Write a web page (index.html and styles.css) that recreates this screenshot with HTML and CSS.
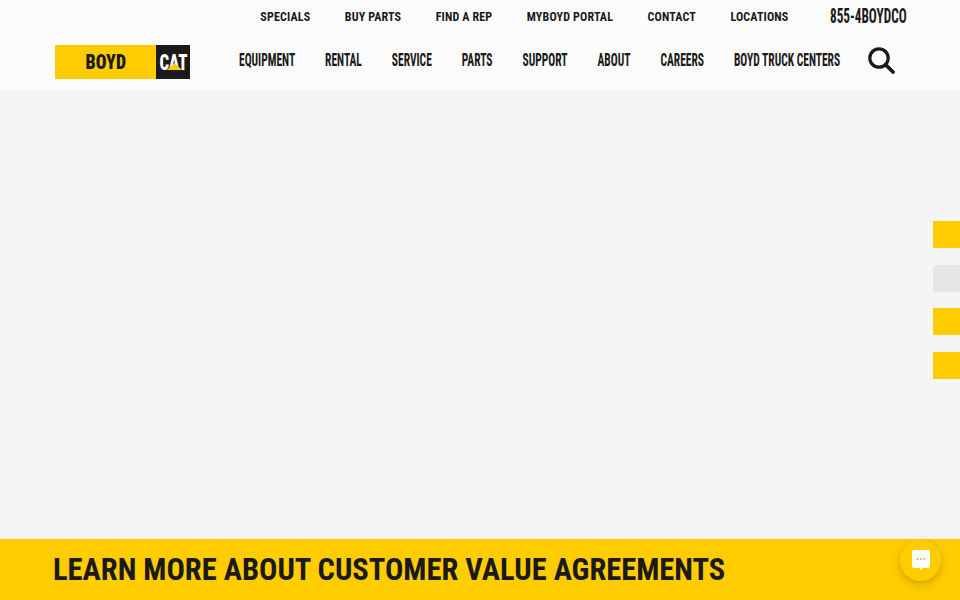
FILE: index.html
```html
<!DOCTYPE html>
<html lang="en">
<head>
  <meta charset="UTF-8">
  <meta name="viewport" content="width=device-width, initial-scale=1.0">
  <title>Boyd CAT</title>
  <link rel="stylesheet" href="styles.css">
</head>
<body>
  <header class="site-header">
    <div class="top-bar">
      <a class="top-link" href="#">SPECIALS</a>
      <a class="top-link" href="#">BUY PARTS</a>
      <a class="top-link" href="#">FIND A REP</a>
      <a class="top-link" href="#">MYBOYD PORTAL</a>
      <a class="top-link" href="#">CONTACT</a>
      <a class="top-link" href="#">LOCATIONS</a>
      <a class="phone" href="#">855-4BOYDCO</a>
    </div>
    <div class="main-bar">
      <a class="logo" href="#">
        <span class="logo-boyd"><span class="logo-boyd-text">BOYD</span></span>
        <span class="logo-cat">
          <span class="logo-cat-text">CAT</span>
          <svg class="logo-cat-mark" width="15" height="7" viewBox="0 0 15 7"><polygon points="7.500,0 15,7 0,7" fill="#ffcc00"/></svg>
        </span>
      </a>
      <nav class="main-nav">
        <a href="#">EQUIPMENT</a>
        <a href="#">RENTAL</a>
        <a href="#">SERVICE</a>
        <a href="#">PARTS</a>
        <a href="#">SUPPORT</a>
        <a href="#">ABOUT</a>
        <a href="#">CAREERS</a>
        <a href="#">BOYD TRUCK CENTERS</a>
      </nav>
      <a class="search" href="#" aria-label="Search">
        <svg width="27" height="27" viewBox="0 0 27 27" fill="none" stroke="#1a1a1a">
          <circle cx="11" cy="11" r="9.200" stroke-width="3.200"/>
          <line x1="18" y1="18" x2="25" y2="25" stroke-width="3.800" stroke-linecap="round"/>
        </svg>
      </a>
    </div>
  </header>

  <main class="hero"></main>

  <section class="banner">
    <h2>LEARN MORE ABOUT CUSTOMER VALUE AGREEMENTS</h2>
  </section>

  <div class="side-tabs">
    <a class="side-tab" href="#"></a>
    <a class="side-tab side-tab-grey" href="#"></a>
    <a class="side-tab" href="#"></a>
    <a class="side-tab" href="#"></a>
  </div>

  <button class="chat-button" aria-label="Chat">
    <svg width="18" height="21" viewBox="0 0 18 21">
      <path d="M2 0h14a2 2 0 0 1 2 2v14a2 2 0 0 1-2 2h-5.500l-1.500 2.500L7.500 18H2a2 2 0 0 1-2-2V2a2 2 0 0 1 2-2z" fill="#fff"/>
      <circle cx="5.500" cy="9" r="1.100" fill="#e0b84a"/>
      <circle cx="9" cy="9" r="1.100" fill="#e0b84a"/>
      <circle cx="12.500" cy="9" r="1.100" fill="#e0b84a"/>
    </svg>
  </button>
</body>
</html>
```

FILE: styles.css
```css
html, body {
  height: 100%;
  overflow: hidden;
}
body {
  margin: 0;
  display: flex;
  flex-direction: column;
  font-family: "Roboto", "Liberation Sans", Arial, sans-serif;
  font-stretch: 75%;
  color: #1a1a1a;
  background-color: #f5f5f5;
}
a {
  color: inherit;
  text-decoration: none;
}
.site-header {
  height: 90px;
  background-color: #fbfbfb;
  flex-shrink: 0;
}
.top-bar {
  height: 32px;
  display: flex;
  justify-content: flex-end;
  align-items: center;
  padding-right: 53px;
}
.top-link {
  margin-top: 1px;
  margin-right: 34.500px;
  font-size: 12px;
  font-weight: 700;
  letter-spacing: 0.15px;
  white-space: nowrap;
}
.phone {
  width: 77px;
  margin-left: 7px;
  font-size: 20px;
  font-weight: 700;
  white-space: nowrap;
  transform: scaleX(0.66);
  transform-origin: left center;
}
.main-bar {
  height: 58px;
  display: flex;
  align-items: center;
  padding-left: 55px;
}
.logo {
  width: 135px;
  height: 34px;
  display: flex;
  margin-top: 2px;
}
.logo-boyd {
  width: 101px;
  background-color: #ffcc00;
  display: flex;
  justify-content: center;
  align-items: center;
}
.logo-boyd-text {
  font-size: 21px;
  font-weight: 900;
  transform: scaleX(0.85);
}
.logo-cat {
  width: 34px;
  background-color: #1a1a1a;
  color: #fff;
  display: flex;
  justify-content: center;
  align-items: center;
  position: relative;
}
.logo-cat-text {
  font-size: 22px;
  font-weight: 900;
  transform: scaleX(0.76);
}
.logo-cat-mark {
  position: absolute;
  left: 11px;
  top: 18px;
}
.main-nav {
  flex: 0 0 602px;
  min-width: 0;
  display: flex;
  gap: 47px;
  margin-left: 49px;
  margin-bottom: 3px;
  font-size: 18px;
  font-weight: 700;
  white-space: nowrap;
  transform: scaleX(0.6375);
  transform-origin: left center;
}
.search {
  display: flex;
  margin-left: 27px;
  margin-bottom: 2px;
}
.hero {
  flex: 1;
}
.banner {
  height: 59px;
  flex-shrink: 0;
  background-color: #ffcc00;
  padding: 0 0 2px 53px;
  display: flex;
  align-items: center;
}
.banner h2 {
  margin: 0;
  font-size: 32px;
  font-weight: 700;
  white-space: nowrap;
  transform: scaleX(0.953);
  transform-origin: left center;
}
.side-tabs {
  position: absolute;
  right: 0;
  top: 221px;
  display: flex;
  flex-direction: column;
  gap: 16.500px;
}
.side-tab {
  display: block;
  width: 27px;
  height: 27px;
  background-color: #ffcc00;
}
.side-tab-grey {
  background-color: #e6e6e6;
}
.chat-button {
  position: absolute;
  right: 19px;
  bottom: 19px;
  width: 41px;
  height: 41px;
  padding: 0;
  border: none;
  border-radius: 50%;
  background-color: #ffcc00;
  box-shadow: 0 3px 8px rgba(0,0,0,0.2);
  display: flex;
  align-items: center;
  justify-content: center;
}
```
